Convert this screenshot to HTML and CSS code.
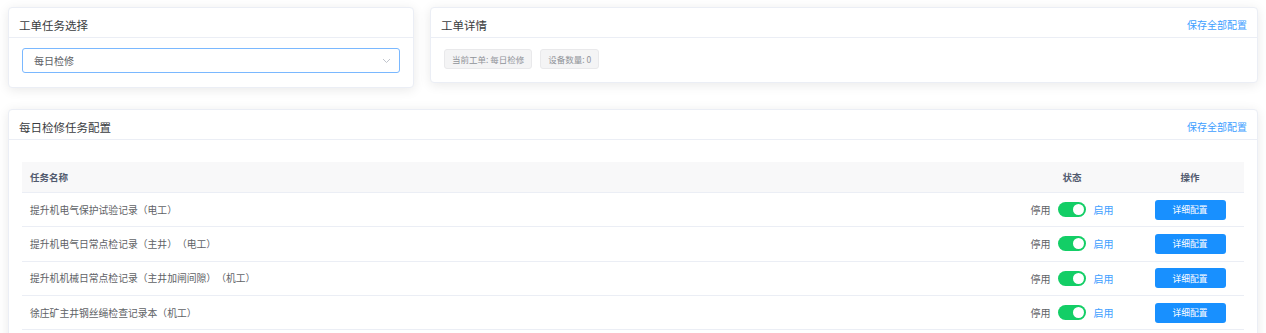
FILE: index.html
```html
<!DOCTYPE html>
<html lang="zh-CN">
<head>
<meta charset="utf-8">
<title>工单任务配置</title>
<link rel="stylesheet" href="styles.css">
</head>
<body>
<div class="page">
  <div class="top-row">
    <section class="card card-select">
      <header class="card-head"><span class="card-title">工单任务选择</span></header>
      <div class="card-body body-select">
        <div class="select">
          <span class="select-value">每日检修</span>
          <svg class="select-arrow" width="9" height="6" viewBox="0 0 9 6"><path d="M1 1 L4.5 4.5 L8 1" fill="none" stroke="#c0c4cc" stroke-width="1"/></svg>
        </div>
      </div>
    </section>
    <section class="card card-detail">
      <header class="card-head"><span class="card-title">工单详情</span><a class="link">保存全部配置</a></header>
      <div class="card-body body-detail">
        <span class="tag">当前工单: 每日检修</span>
        <span class="tag">设备数量: 0</span>
      </div>
    </section>
  </div>
  <section class="card card-config">
    <header class="card-head"><span class="card-title">每日检修任务配置</span><a class="link">保存全部配置</a></header>
    <div class="card-body body-config">
      <div class="table">
        <div class="tr th">
          <div class="cell name">任务名称</div>
          <div class="cell center">状态</div>
          <div class="cell center">操作</div>
        </div>
        <div class="tr">
          <div class="cell name">提升机电气保护试验记录（电工）</div>
          <div class="cell center status"><span class="off">停用</span><span class="switch"><span class="knob"></span></span><span class="on">启用</span></div>
          <div class="cell center"><button class="btn">详细配置</button></div>
        </div>
        <div class="tr">
          <div class="cell name">提升机电气日常点检记录（主井）（电工）</div>
          <div class="cell center status"><span class="off">停用</span><span class="switch"><span class="knob"></span></span><span class="on">启用</span></div>
          <div class="cell center"><button class="btn">详细配置</button></div>
        </div>
        <div class="tr">
          <div class="cell name">提升机机械日常点检记录（主井加闸间隙）（机工）</div>
          <div class="cell center status"><span class="off">停用</span><span class="switch"><span class="knob"></span></span><span class="on">启用</span></div>
          <div class="cell center"><button class="btn">详细配置</button></div>
        </div>
        <div class="tr">
          <div class="cell name">徐庄矿主井钢丝绳检查记录本（机工）</div>
          <div class="cell center status"><span class="off">停用</span><span class="switch"><span class="knob"></span></span><span class="on">启用</span></div>
          <div class="cell center"><button class="btn">详细配置</button></div>
        </div>
      </div>
    </div>
  </section>
</div>
</body>
</html>
```

FILE: styles.css
```css
* { box-sizing: border-box; }
html, body { margin: 0; background: #ffffff; }
body {
  font-family: "Noto Sans CJK SC", "Noto Sans", "Liberation Sans", sans-serif;
  color: #606266;
  font-size: 10px;
  text-spacing-trim: space-all;
  font-feature-settings: "halt" 0, "chws" 0;
}
.page { padding: 7px 8px; }
.top-row { display: flex; gap: 16px; align-items: flex-start; }
.card {
  background: #fff;
  border: 1px solid #ebeef5;
  border-radius: 4px;
  box-shadow: 0 2px 12px 0 rgba(0, 0, 0, 0.09);
}
.card-select { width: 406px; }
.card-detail { flex: 1; }
.card-config { margin-top: 21px; }
.card-head {
  display: flex;
  justify-content: space-between;
  align-items: center;
  height: 30px;
  padding: 9px 10px 4px 10px;
  border-bottom: 1px solid #ebeef5;
}
.card-title { font-size: 11.5px; line-height: 16px; color: #3a3c40; }
.link { font-size: 10px; line-height: 16px; color: #409eff; cursor: pointer; }
.body-select { padding: 10px 13px 14px; }
.select {
  height: 25px;
  border: 1px solid #7ab8ff;
  border-radius: 3px;
  display: flex;
  align-items: center;
  justify-content: space-between;
  padding: 0 8px 0 11px;
}
.select-value { font-size: 10px; color: #606266; }
.body-detail { padding: 11px 13px 13px; display: flex; gap: 8px; }
.tag {
  height: 20px;
  line-height: 18px;
  padding: 0 7px;
  font-size: 8.5px;
  color: #909399;
  background: #f4f4f5;
  border: 1px solid #e9e9eb;
  border-radius: 3px;
}
.body-config { padding: 22px 13px 14px; }
.table { display: flex; flex-direction: column; }
.tr {
  display: grid;
  grid-template-columns: 1fr 128px 108px;
  height: 34.3px;
  border-bottom: 1px solid #ebeef5;
  align-items: center;
}
.tr.th {
  height: 31px;
  background: #f8f8f9;
  font-weight: 700;
  font-size: 9.5px;
  color: #515a6e;
}
.cell { padding: 0 8px; }
.name { font-size: 9.8px; }
.th .name { font-size: 9.5px; }
.center { text-align: center; display: flex; justify-content: center; align-items: center; }
.status { gap: 7px; font-size: 10px; }
.off { color: #606266; }
.on { color: #409eff; margin-left: 1px; }
.switch {
  width: 28px;
  height: 15px;
  border-radius: 8px;
  background: #13ce66;
  display: flex;
  justify-content: flex-end;
  align-items: center;
  padding: 0 2px;
}
.knob { width: 11px; height: 11px; border-radius: 50%; background: #fff; }
.btn {
  width: 71px;
  height: 20px;
  border: none;
  border-radius: 3px;
  background: #1890ff;
  color: #fff;
  font-family: inherit;
  font-size: 8.75px;
  padding: 0;
}
```
